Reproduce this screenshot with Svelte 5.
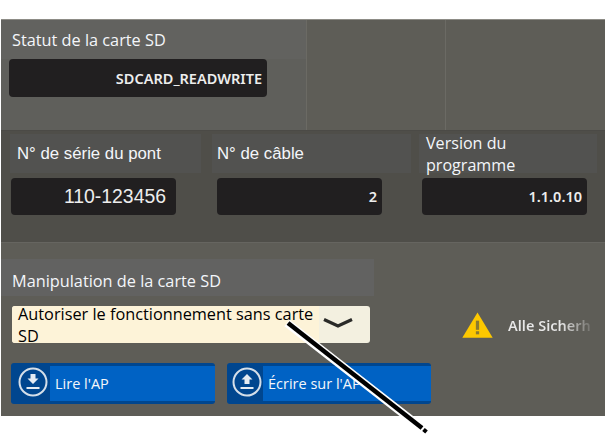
<script>
  const fields = [
    { label: 'N° de série du pont', value: '110-123456', kind: 'serial' },
    { label: 'N° de câble', value: '2', kind: 'cable' },
    { label: 'Version du programme', value: '1.1.0.10', kind: 'version' }
  ];
</script>

<div class="page">
  <div class="panel">
    <section class="status">
      <div class="status-main">
        <div class="status-label">Statut de la carte SD</div>
        <div class="display status-value">SDCARD_READWRITE</div>
      </div>
      <div class="status-cell"></div>
      <div class="status-cell"></div>
    </section>

    <section class="info">
      {#each fields as field}
        <div class="field {field.kind}">
          <div class="field-label">{field.label}</div>
          <div class="display">{field.value}</div>
        </div>
      {/each}
    </section>

    <section class="manip">
      <div class="manip-label">Manipulation de la carte SD</div>
      <div class="select-row">
        <div class="select">
          <div class="select-text">Autoriser le fonctionnement sans carte SD</div>
          <div class="select-arrow">
            <svg width="30" height="12" viewBox="0 0 30 12">
              <path d="M1 2.500 L15 9 L29 2.500" fill="none" stroke="#2a2a28" stroke-width="3.200" />
            </svg>
          </div>
        </div>
        <div class="warning">
          <svg width="31" height="26" viewBox="0 0 32 27">
            <path d="M16 0.500 L31.800 26.800 H0.200 Z" fill="#fdc800" />
            <rect x="14.300" y="9" width="3.400" height="9.500" fill="#8a7a30" />
            <rect x="14.300" y="20" width="3.400" height="3.200" fill="#8a7a30" />
          </svg>
          <span class="warning-text">Alle Sicherh</span>
        </div>
      </div>
      <div class="buttons">
        <div class="button read">
          <div class="button-icon">
            <svg width="30" height="30" viewBox="0 0 30 30">
              <circle cx="15" cy="15" r="13.500" fill="none" stroke="#d5dfe9" stroke-width="2" />
              <path d="M12.500 7 H17.500 V11.500 H20.500 L15 17 L9.500 11.500 H12.500 Z" fill="#e4ebf2" />
              <rect x="8.500" y="20" width="13" height="2" fill="#e4ebf2" />
            </svg>
          </div>
          <span>Lire l'AP</span>
        </div>
        <div class="button write">
          <div class="button-icon">
            <svg width="30" height="30" viewBox="0 0 30 30">
              <circle cx="15" cy="15" r="13.500" fill="none" stroke="#d5dfe9" stroke-width="2" />
              <path d="M12.500 17 H17.500 V12.500 H20.500 L15 7 L9.500 12.500 H12.500 Z" fill="#e4ebf2" />
              <rect x="8.500" y="20" width="13" height="2" fill="#e4ebf2" />
            </svg>
          </div>
          <span>Écrire sur l'AP</span>
        </div>
      </div>
    </section>
  </div>

  <!-- callout line laid over the screenshot -->
  <svg class="callout" width="605" height="435" viewBox="0 0 605 435">
    <line x1="287" y1="323" x2="423" y2="429" stroke="#fff" stroke-width="8.500" />
    <line x1="288" y1="323" x2="422" y2="428" stroke="#000" stroke-width="4.500" />
    <line x1="423.500" y1="429.500" x2="426.500" y2="432" stroke="#000" stroke-width="4" />
  </svg>
</div>

<style>
  :global(body) {
    background: #fff;
  }

  .page {
    position: relative;
    width: 605px;
    height: 435px;
    padding-top: 19px;
    box-sizing: border-box;
    overflow: hidden;
  }

  .panel {
    margin-left: 1px;
    width: 604px;
    height: 397px;
    display: flex;
    flex-direction: column;
    background: #5e5d57;
  }

  .status {
    height: 111px;
    box-sizing: border-box;
    display: grid;
    grid-template-columns: 305px 139px 159px;
    border-top: 1px solid #8d8c86;
  }

  .status-main {
    background: #5f5f5b;
  }

  .status-cell {
    border-left: 1px solid #6b6a64;
  }

  .status-label {
    height: 39px;
    box-sizing: border-box;
    padding: 9px 0 0 11px;
    background: #62625f;
    font: 16.300px/22px "Open Sans", sans-serif;
    color: #f4f6fa;
  }

  .display {
    height: 37px;
    box-sizing: border-box;
    padding: 0 5px;
    display: flex;
    align-items: center;
    justify-content: flex-end;
    background: #211f20;
    border-radius: 4px;
    color: #ededed;
    font: 600 14.500px/37px "Noto Sans", sans-serif;
  }

  .status-value {
    width: 258px;
    height: 38px;
    margin-left: 8px;
  }

  .info {
    height: 112px;
    display: flex;
    padding: 3px 0 0 9px;
    background: #4f4e49;
    border-top: 1px solid #4b4a46;
    box-sizing: border-box;
  }

  .field {
    display: flex;
    flex-direction: column;
  }

  .field-label {
    height: 39px;
    margin-bottom: 5px;
    box-sizing: border-box;
    background: #525250;
    color: #f4f6fa;
    display: flex;
    align-items: center;
    font: 16.800px/23px "Liberation Sans", sans-serif;
  }

  .field .display {
    width: 165px;
  }

  .serial {
    width: 191px;
    margin-right: 11px;
  }

  .serial .field-label {
    padding-left: 7px;
  }

  .serial .display {
    margin-left: 1px;
    padding-right: 10px;
    font: 400 19.400px/37px "Liberation Sans", sans-serif;
  }

  .cable {
    width: 199px;
    margin-right: 8px;
  }

  .cable .field-label {
    padding-left: 5px;
  }

  .cable .display {
    margin-left: 5px;
  }

  .version {
    width: 178px;
  }

  .version .field-label {
    padding: 0 40px 0 7px;
    font: 16.100px/22px "Open Sans", sans-serif;
  }

  .version .display {
    margin-left: 3px;
  }

  .manip {
    flex: 1;
    padding-left: 10px;
    border-top: 1px solid #666560;
  }

  .manip-label {
    height: 37px;
    width: 373px;
    margin: 16px 0 10px -10px;
    padding: 11px 0 0 11px;
    box-sizing: border-box;
    background: #626261;
    font: 16.300px/22px "Open Sans", sans-serif;
    color: #f4f6fa;
  }

  .select-row {
    display: flex;
    align-items: flex-start;
    padding-left: 1px;
  }

  .select {
    width: 358px;
    height: 37px;
    display: flex;
    border-radius: 3px;
    background: #f3f0e0;
  }

  .select-text {
    width: 307px;
    height: 37px;
    padding-left: 6px;
    box-sizing: border-box;
    display: flex;
    align-items: center;
    border-radius: 3px 0 0 3px;
    background: #fdf3d8;
    color: #000;
    font: 16.300px/22px "Open Sans", sans-serif;
  }

  .select-arrow {
    flex: 1;
    display: flex;
    align-items: center;
    justify-content: center;
    padding: 0 14px 4px 0;
    box-sizing: border-box;
  }

  .warning {
    display: flex;
    align-items: center;
    margin: 5px 0 0 92px;
    gap: 15px;
  }

  .warning-text {
    font: 600 14.500px/26px "Noto Sans", sans-serif;
    width: 88px;
    padding-top: 1px;
    white-space: nowrap;
    background: linear-gradient(to right, #e8e8e8 60%, #5e5d57 100%);
    -webkit-background-clip: text;
    background-clip: text;
    color: transparent;
  }

  .buttons {
    display: flex;
    margin-top: 20px;
    gap: 12px;
  }

  .button {
    width: 204px;
    height: 41px;
    display: flex;
    background: #0062c4;
    border-top: 3px solid #00468f;
    border-bottom: 3px solid #00468f;
    box-sizing: border-box;
    border-radius: 3px;
    color: #f4f6fa;
    font: 14.500px/35px "Open Sans", sans-serif;
  }

  .button-icon {
    box-sizing: border-box;
    margin-right: 5px;
    padding-bottom: 3px;
    background: #00468f;
    display: flex;
    align-items: center;
  }

  .read .button-icon {
    width: 39px;
    padding-left: 7px;
  }

  .write .button-icon {
    width: 36px;
    padding-left: 5px;
  }

  .callout {
    position: absolute;
    left: 0;
    top: 0;
    pointer-events: none;
  }
</style>
